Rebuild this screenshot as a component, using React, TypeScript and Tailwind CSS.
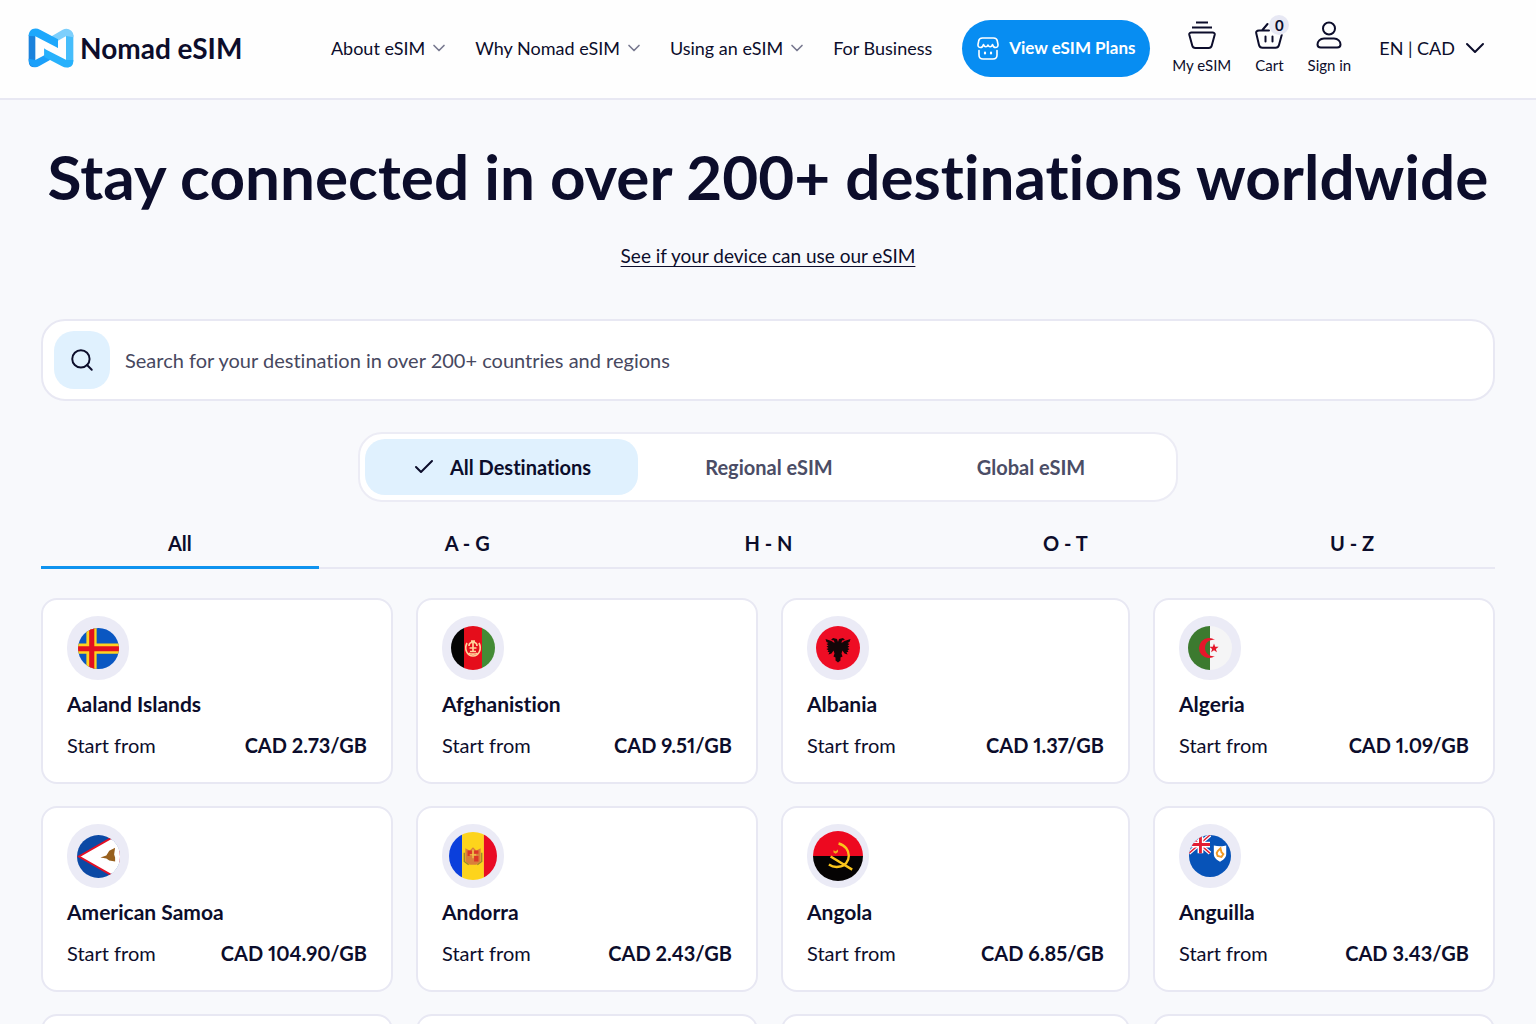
import { useState } from "react"
import type { ReactNode } from "react"
import { Check, ChevronDown, Search } from "lucide-react"

const navLinks = [
  { label: "About eSIM", menu: true },
  { label: "Why Nomad eSIM", menu: true },
  { label: "Using an eSIM", menu: true },
  { label: "For Business", menu: false },
]

const regions = ["All Destinations", "Regional eSIM", "Global eSIM"]
const letters = ["All", "A - G", "H - N", "O - T", "U - Z"]

function Logo() {
  return (
    <svg width="46" height="40" viewBox="0 0 138 120" aria-hidden="true">
      <path d="M2 20 L22 24 V96 L20 118 Q2 118 2 98 Z" fill="#1b82dc" />
      <path d="M136 20 L114 24 V96 L118 118 Q136 118 136 98 Z" fill="#45bdfb" />
      <path d="M68 26 L104 5 Q118 -2 130 8 Q138 15 136 28 L115 24 L90 38 V60 Z" fill="#7dcffc" />
      <path d="M70 94 L34 114 Q20 122 8 112 Q1 105 2 92 L22 96 L49 82 V60 Z" fill="#1ba0fa" />
      <path d="M2 24 Q2 10 12 4 Q24 -2 36 5 L90 34 V60 L22 25 Z" fill="#1ea8fc" />
      <path d="M136 96 Q136 110 126 116 Q114 122 102 115 L49 87 V62 L115 96 Z" fill="#27b1fc" />
    </svg>
  )
}

function StoreIcon() {
  return (
    <svg width="22" height="23" viewBox="0 0 22 23" fill="none" stroke="currentColor" strokeWidth="1.600" strokeLinecap="round" strokeLinejoin="round">
      <path d="M5.500 1h11C19 1 20 2 20.300 4l.7 3.500c.3 2-1 3-2.500 3S16 9.500 15.500 7.500c-1 3-3.500 3-4.500.5-1 2.500-3.500 2.500-4.500-.5C6 9.500 5 10.500 3.500 10.500S.7 9.500 1 7.500L1.700 4C2 2 3 1 5.500 1Z" />
      <path d="M2 13.500V18c0 2.500 1.500 4 4 4h10c2.500 0 4-1.500 4-4v-4.500" />
      <path d="M8 15.700v.8M14 15.700v.8" strokeWidth="2.200" />
    </svg>
  )
}

function StackIcon() {
  return (
    <svg width="28" height="28" viewBox="0 0 28 28" fill="none" stroke="currentColor" strokeWidth="2" strokeLinejoin="round">
      <path d="M8 1.500h12M4 6.500h20M3.500 11.500h21c1.500 0 2.500 1 2.200 2.300l-3 11c-.4 1.500-1.400 2.200-3 2.200H7.300c-1.600 0-2.600-.7-3-2.200l-3-11c-.3-1.300.7-2.300 2.200-2.300Z" />
    </svg>
  )
}

function BasketIcon() {
  return (
    <svg width="28" height="28" viewBox="0 0 28 28" fill="none" stroke="currentColor" strokeWidth="2" strokeLinecap="round" strokeLinejoin="round">
      <path d="M12.500 3 7 9.500M14 9.500H4c-2.300 0-3.200 1.200-2.700 3l2.700 11.500c.5 2 1.500 2.800 3.500 2.800h13c2 0 3-.8 3.500-2.800L26.700 14M10.500 15.500v5M17.500 15.500v5" />
    </svg>
  )
}

function UserIcon() {
  return (
    <svg width="28" height="28" viewBox="0 0 28 28" fill="none" stroke="currentColor" strokeWidth="2">
      <circle cx="14" cy="7.500" r="6" />
      <path d="M9 17.500h10c4 0 6.500 3 6.500 6 0 2-1.300 3-3.300 3H5.800c-2 0-3.300-1-3.300-3 0-3 2.500-6 6.500-6Z" />
    </svg>
  )
}

function Flag({ size, children }: { size: number; children: ReactNode }) {
  return (
    <svg width={size} height={size} viewBox="0 0 44 44" className="rounded-full" aria-hidden="true">
      {children}
    </svg>
  )
}

const destinations = [
  {
    name: "Aaland Islands",
    price: "CAD 2.73/GB",
    flag: (
      <Flag size={41}>
        <path d="M0 0h44v44H0z" fill="#0a57c2" />
        <path d="M9 0h11v44H9zM0 16.500h44v11H0z" fill="#ffd21f" />
        <path d="M12 0h5.500v44H12zM0 19.500h44v5.500H0z" fill="#e3101f" />
      </Flag>
    ),
  },
  {
    name: "Afghanistion",
    price: "CAD 9.51/GB",
    flag: (
      <Flag size={44}>
        <path d="M0 0h13v44H0z" fill="#050505" />
        <path d="M13 0h18v44H13z" fill="#e50d1b" />
        <path d="M31 0h13v44H31z" fill="#438b35" />
        <g fill="none" stroke="#ffd39a" strokeWidth="1.700">
          <path d="M16 17c-3 6 0 13 6 13s9-7 6-13" />
          <path d="M17.500 27c1.500 1.500 7.500 1.500 9 0M22 15v11M18 20c0-5 8-5 8 0M18.500 22h7M19 25.500h6M20 15h4" />
        </g>
      </Flag>
    ),
  },
  {
    name: "Albania",
    price: "CAD 1.37/GB",
    flag: (
      <Flag size={44}>
        <path d="M0 0h44v44H0z" fill="#ee0d24" />
        <path
          d="m22 16-1-3-4-1-2 2 3 .5.500 2.500-3-2-6-2 1 3 2 1-2 1 2 1.500-2 1 2 1.500-2 1 2 1.500-1 1.500h2l-1 2.500 3-1 2-3 1 3-1 3 2 1 0 3 2.500 2 2.500-2 0-3 2-1-1-3 1-3 2 3 3 1-1-2.500h2l-1-1.500 2-1.500-2-1 2-1.500-2-1 2-1.500-2-1 2-1 1-3-6 2-3 2 .5-2.500 3-.5-2-2-4 1Z"
          fill="#140608"
        />
      </Flag>
    ),
  },
  {
    name: "Algeria",
    price: "CAD 1.09/GB",
    flag: (
      <Flag size={44}>
        <path d="M0 0h22v44H0z" fill="#3c7a2f" />
        <path d="M22 0h22v44H22z" fill="#f5f5f6" />
        <path d="M27 14a10 10 0 1 0 0 16 8.200 8.200 0 1 1 0-16Z" fill="#e5162a" />
        <path d="m26 17.500 1.200 3.200 3.400.1-2.700 2.100 1 3.300-2.900-1.900-2.900 1.900 1-3.300-2.700-2.100 3.400-.1Z" fill="#e5162a" />
      </Flag>
    ),
  },
  {
    name: "American Samoa",
    price: "CAD 104.90/GB",
    flag: (
      <Flag size={43}>
        <path d="M0 0h44v44H0z" fill="#0b49a5" />
        <path d="M44-2 2 22l42 24Z" fill="#fff" stroke="#e30f25" strokeWidth="2" />
        <path d="M36 0h8v44h-8z" fill="#fff" />
        <path d="m24 23 6-2 3-5 6-3-1 7 1 3 0 4-6-1-3-2Z" fill="#98601d" />
      </Flag>
    ),
  },
  {
    name: "Andorra",
    price: "CAD 2.43/GB",
    flag: (
      <Flag size={48}>
        <path d="M0 0h12v44H0z" fill="#0b3fdc" />
        <path d="M12 0h20v44H12z" fill="#fdd41c" />
        <path d="M32 0h12v44H32z" fill="#e90b25" />
        <path d="m15 15 4 2 3-3 3 3 4-2v12l-4 3h-6l-4-3Z" fill="#d9803a" />
        <path d="M17 17h4v5h-4zM23 22h4v5h-4zM23 17h4v3h-4z" fill="#dc3728" />
        <path d="M14 19v8l4 3M30 19v8l-4 3" fill="none" stroke="#98862d" strokeWidth="1.200" />
        <path d="M22 16v8M19 21h6" stroke="#f6c64a" strokeWidth="1.200" />
      </Flag>
    ),
  },
  {
    name: "Angola",
    price: "CAD 6.85/GB",
    flag: (
      <Flag size={50}>
        <path d="M0 0h44v22H0z" fill="#ed0920" />
        <path d="M0 22h44v22H0z" fill="#050303" />
        <path d="M22.500 11c12 3 12 19 0 20.500-3 .4-6-.3-8.500-2M15.500 22.500l19 11.500" fill="none" stroke="#fbc51b" strokeWidth="2.100" />
        <path d="m18 17 2 .8 2-1.600v2.300l-2 1.500-2-1Z" fill="#f4a61b" />
      </Flag>
    ),
  },
  {
    name: "Anguilla",
    price: "CAD 3.43/GB",
    flag: (
      <Flag size={42}>
        <path d="M0 0h44v44H0z" fill="#0753b8" />
        <path d="m0 0 22 19M22 0 0 19" stroke="#fff" strokeWidth="4" />
        <path d="m0 0 22 19M22 0 0 19" stroke="#e21d32" strokeWidth="1.500" />
        <path d="M12 0v19M0 10h22" stroke="#fff" strokeWidth="6" />
        <path d="M12 0v19M0 10h22" stroke="#e21d32" strokeWidth="3" />
        <path d="M26 11c4 1 10 1 13 0v9c0 4-3 6-6.500 8-3.500-2-6.500-4-6.500-8Z" fill="#fff" />
        <path d="m30 17 3-3 1 4 2 2-2 3-4-1-1-3Z" fill="none" stroke="#f09a25" strokeWidth="2" />
      </Flag>
    ),
  },
]

function Header() {
  return (
    <header className="flex h-[100px] items-center border-b-2 border-[#e8e8f3] bg-[#fefefe] pr-[45px] pb-0.5 pl-7">
      <a href="#" className="flex items-center gap-1.5 text-[28px] leading-8 font-bold whitespace-nowrap">
        <Logo />
        Nomad eSIM
      </a>
      <nav className="ml-auto flex items-center gap-[26px] text-[18px] leading-6">
        {navLinks.map((link) => (
          <a key={link.label} href="#" className="flex items-center gap-1 whitespace-nowrap">
            {link.label}
            {link.menu && <ChevronDown className="size-5 text-[#77788f]" />}
          </a>
        ))}
      </nav>
      <button className="ml-[30px] flex h-[57px] w-[188px] items-center justify-center gap-2.5 rounded-full bg-[#078df2] text-[17px] font-bold whitespace-nowrap text-white">
        <StoreIcon />
        View eSIM Plans
      </button>
      <div className="ml-[22px] flex gap-6 text-[15px] leading-5 whitespace-nowrap">
        <a href="#" className="flex flex-col items-center gap-1.5">
          <StackIcon />
          My eSIM
        </a>
        <a href="#" className="relative flex flex-col items-center gap-1.5">
          <BasketIcon />
          Cart
          <span className="absolute -top-1.5 left-3.5 flex size-5 items-center justify-center rounded-full bg-[#e7e8f4] text-[15px] font-bold">
            0
          </span>
        </a>
        <a href="#" className="flex flex-col items-center gap-1.5">
          <UserIcon />
          Sign in
        </a>
      </div>
      <button className="ml-7 flex items-center gap-1 text-[18px] whitespace-nowrap">
        EN | CAD
        <ChevronDown className="size-8" strokeWidth={1.5} />
      </button>
    </header>
  )
}

export default function App() {
  const [region, setRegion] = useState(regions[0])
  const [letter, setLetter] = useState(letters[0])

  return (
    <div className="h-screen overflow-hidden bg-[#f8f9fc] font-['Lato','Noto_Sans',sans-serif] text-[#0c0d2b] [font-variant-ligatures:none]">
      <Header />
      <main className="px-[41px]">
        <h1 className="mt-[38px] text-center text-[62px] leading-[76px] font-bold whitespace-nowrap">
          Stay connected in over 200+ destinations worldwide
        </h1>
        <p className="mt-[30px] text-center text-[19px] leading-6">
          <a href="#" className="underline decoration-1 underline-offset-3">
            See if your device can use our eSIM
          </a>
        </p>

        {/* Search */}
        <label className="mt-[51px] flex h-[82px] items-center gap-[15px] rounded-3xl border-2 border-[#e8e8f3] bg-white px-[11px]">
          <span className="flex h-[58px] w-14 shrink-0 items-center justify-center rounded-[20px] bg-[#e0f1fe]">
            <Search className="size-[26px]" strokeWidth={1.8} />
          </span>
          <input
            type="text"
            aria-label="Search destinations"
            placeholder="Search for your destination in over 200+ countries and regions"
            className="flex-1 text-[20px] outline-none placeholder:text-[#474860]"
          />
        </label>

        {/* Region switch */}
        <div className="mx-auto mt-[31px] flex h-[70px] max-w-[820px] rounded-3xl border-2 border-[#ececf5] bg-white py-[5px] pr-3.5 pl-[5px] text-[20px] font-bold">
          {regions.map((name) => (
            <button
              key={name}
              onClick={() => setRegion(name)}
              className={
                name === region
                  ? "flex w-[273px] items-center justify-center gap-3.5 rounded-[20px] bg-[#e0f1fe]"
                  : "flex flex-1 items-center justify-center text-[#4b4d66]"
              }
            >
              {name === region && <Check className="size-6" strokeWidth={2} />}
              {name}
            </button>
          ))}
        </div>

        {/* Letter filter */}
        <div className="mt-[18px] grid h-[49px] grid-cols-[278fr_297fr_306fr_288fr_286fr] border-b-2 border-[#e8e8f3] text-[20px] font-bold">
          {letters.map((name) => (
            <button
              key={name}
              onClick={() => setLetter(name)}
              className={
                name === letter ? "-mb-0.5 border-b-[3px] border-[#0f93ef]" : "-mb-0.5 border-b-[3px] border-transparent"
              }
            >
              {name}
            </button>
          ))}
        </div>

        <ul className="mt-[29px] grid grid-cols-[352fr_342fr_349fr_342fr] gap-x-[23px] gap-y-[22px] leading-6">
          {destinations.map((item) => (
            <li key={item.name} className="h-[186px] rounded-2xl border-2 border-[#e8e8f3] bg-white px-6 pt-4">
              <div className="flex h-16 w-[62px] items-center justify-center rounded-full bg-[#ebebf6]">{item.flag}</div>
              <h2 className="mt-3 text-[21px] leading-6 font-bold">{item.name}</h2>
              <p className="mt-[17px] flex justify-between text-[20px] leading-6 whitespace-nowrap">
                <span>Start from</span>
                <span className="font-bold proportional-nums">{item.price}</span>
              </p>
            </li>
          ))}
          {/* Placeholders for the next row */}
          {[0, 1, 2, 3].map((slot) => (
            <li key={slot} className="h-[186px] rounded-2xl border-2 border-[#e8e8f3] bg-white" />
          ))}
        </ul>
      </main>
    </div>
  )
}
